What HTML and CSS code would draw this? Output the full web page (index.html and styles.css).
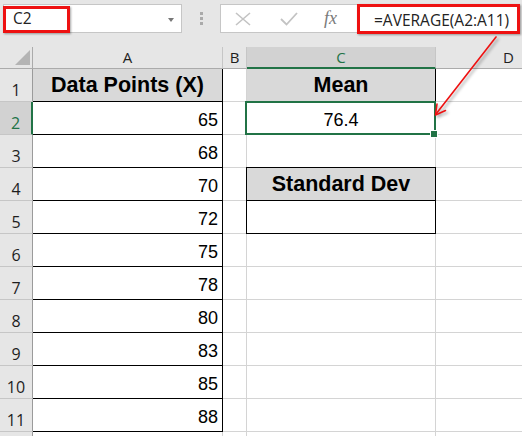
FILE: index.html
```html
<!DOCTYPE html>
<html>
<head>
<meta charset="utf-8">
<link rel="stylesheet" href="styles.css">
</head>
<body>
<div class="app">
  <div class="bar">
    <div class="namebox">
      <span class="nb-text">C2</span>
      <span class="caret"></span>
      <span class="mark"></span>
    </div>
    <div class="grip"><i></i><i></i><i></i></div>
    <div class="fxbox">
      <svg class="ico-x" width="16" height="14" viewBox="0 0 16 14"><path d="M1 1 L15 13 M15 1 L1 13" stroke="#c3c3c3" stroke-width="1.6" fill="none"/></svg>
      <svg class="ico-ok" width="18" height="14" viewBox="0 0 18 14"><path d="M1 7 L6.5 12.5 L17 1" stroke="#c3c3c3" stroke-width="1.8" fill="none"/></svg>
      <span class="fx">fx</span>
    </div>
    <div class="formula">=AVERAGE(A2:A11)</div>
  </div>

  <div class="sheet">
    <div class="corner"><svg width="33" height="22" viewBox="0 0 33 22"><polygon points="30,3 30,18 15,18" fill="#b4b4b4"/></svg></div>
    <div class="ch">A</div>
    <div class="ch">B</div>
    <div class="ch sel">C</div>
    <div class="ch">D</div>

    <div class="rh">1</div>
    <div class="c b hd">Data Points (X)</div>
    <div class="c"></div>
    <div class="c b hd">Mean</div>
    <div class="c"></div>

    <div class="rh sel">2</div>
    <div class="c b num">65</div>
    <div class="c"></div>
    <div class="c b val active">76.4</div>
    <div class="c"></div>

    <div class="rh">3</div>
    <div class="c b num">68</div>
    <div class="c"></div>
    <div class="c"></div>
    <div class="c"></div>

    <div class="rh">4</div>
    <div class="c b num">70</div>
    <div class="c"></div>
    <div class="c b hd boxtop boxleft">Standard Dev</div>
    <div class="c"></div>

    <div class="rh">5</div>
    <div class="c b num">72</div>
    <div class="c"></div>
    <div class="c b boxleft"></div>
    <div class="c"></div>

    <div class="rh">6</div>
    <div class="c b num">75</div>
    <div class="c"></div>
    <div class="c"></div>
    <div class="c"></div>

    <div class="rh">7</div>
    <div class="c b num">78</div>
    <div class="c"></div>
    <div class="c"></div>
    <div class="c"></div>

    <div class="rh">8</div>
    <div class="c b num">80</div>
    <div class="c"></div>
    <div class="c"></div>
    <div class="c"></div>

    <div class="rh">9</div>
    <div class="c b num">83</div>
    <div class="c"></div>
    <div class="c"></div>
    <div class="c"></div>

    <div class="rh">10</div>
    <div class="c b num">85</div>
    <div class="c"></div>
    <div class="c"></div>
    <div class="c"></div>

    <div class="rh">11</div>
    <div class="c b num">88</div>
    <div class="c"></div>
    <div class="c"></div>
    <div class="c"></div>

    <div class="rh"></div>
    <div class="c"></div>
    <div class="c"></div>
    <div class="c"></div>
    <div class="c"></div>
  </div>

  <svg class="arrow" width="522" height="436" viewBox="0 0 522 436">
    <g stroke="#ee1111" stroke-width="1.6" fill="none" stroke-linecap="round" stroke-linejoin="round">
      <line x1="496" y1="37" x2="436" y2="114"/>
      <polyline points="445.5,110.5 435.5,115 437,104"/>
    </g>
  </svg>
</div>
</body>
</html>
```

FILE: styles.css
```css
* { box-sizing: border-box; }

html, body {
  margin: 0;
  padding: 0;
}

body {
  background: #e6e6e6;
  font-family: "Open Sans", "Noto Sans", sans-serif;
}

.app {
  position: relative;
  width: 522px;
  height: 436px;
  overflow: hidden;
  background: #e6e6e6;
}

/* ---------- formula bar ---------- */
.bar {
  display: flex;
  align-items: flex-start;
  height: 47px;
  padding-top: 4px;
  padding-left: 3px;
}

.namebox {
  position: relative;
  display: flex;
  align-items: center;
  justify-content: space-between;
  width: 179px;
  height: 29px;
  background: #fff;
  border: 1px solid #c6c6c6;
  padding: 1px 7px 0 9px;
  font-size: 15.5px;
  color: #222;
}

.nb-text { line-height: 1; }

.caret {
  width: 0;
  height: 0;
  border-left: 3.5px solid transparent;
  border-right: 3.5px solid transparent;
  border-top: 4px solid #777;
  margin-top: 1px;
}

.mark {
  position: absolute;
  left: -1px;
  top: 1px;
  width: 67px;
  height: 27px;
  border: 3px solid #ee1111;
  box-shadow: 1px 1px 2px rgba(0, 0, 0, 0.35);
}

.grip {
  width: 38px;
  height: 29px;
  display: flex;
  flex-direction: column;
  align-items: center;
  gap: 2px;
  padding-top: 8px;
}

.grip i {
  display: block;
  width: 3px;
  height: 3px;
  background: #aaaaaa;
}

.fxbox {
  display: flex;
  align-items: center;
  width: 137px;
  height: 29px;
  background: #fff;
  border: 1px solid #c6c6c6;
  border-right: none;
  padding-left: 14px;
}

.ico-x { margin-top: 1px; }
.ico-ok { margin-left: 29px; margin-top: 1px; }

.fx {
  margin-left: 26px;
  font-family: "Liberation Serif", "DejaVu Serif", serif;
  font-style: italic;
  font-size: 18px;
  line-height: 1;
  color: #7a7a7a;
  margin-top: -2px;
}

.formula {
  display: flex;
  align-items: center;
  width: 163px;
  height: 30px;
  background: #fff;
  border: 3px solid #ee1111;
  padding: 1px 0 0 14px;
  font-size: 15.5px;
  color: #222;
  white-space: nowrap;
  box-shadow: 1px 1px 2px rgba(0, 0, 0, 0.35);
}

/* ---------- sheet grid ---------- */
.sheet {
  display: grid;
  grid-template-columns: 33px 190px 24px 189px 146px;
  grid-template-rows: 22px repeat(12, 33px);
  background: #fff;
  width: 582px;
}

.corner {
  background: #e6e6e6;
  border-right: 1px solid #ababab;
  border-bottom: 1px solid #ababab;
}
.corner svg { display: block; }

.ch {
  display: flex;
  align-items: flex-end;
  justify-content: center;
  background: #e6e6e6;
  border-right: 1px solid #c6c6c6;
  border-bottom: 1px solid #ababab;
  padding-bottom: 3px;
  font-size: 15px;
  line-height: 1;
  color: #1e1e1e;
}

.ch.sel {
  background: #d2d2d2;
  color: #217346;
  border-bottom: 2px solid #217346;
  padding-bottom: 2px;
}

.rh {
  display: flex;
  align-items: flex-end;
  justify-content: center;
  background: #e6e6e6;
  border-right: 1px solid #9b9b9b;
  border-bottom: 1px solid #c6c6c6;
  padding-bottom: 3px;
  font-size: 16px;
  line-height: 1;
  color: #1e1e1e;
}

.rh.sel {
  background: #d2d2d2;
  color: #217346;
  border-right: 2px solid #217346;
}

.c {
  display: flex;
  align-items: flex-end;
  background: #fff;
  border-right: 1px solid #d4d4d4;
  border-bottom: 1px solid #d4d4d4;
  padding: 0 4px 5px 4px;
  font-family: "Liberation Sans", Arial, sans-serif;
  font-size: 18px;
  line-height: 1;
  color: #000;
}

.c.b {
  border-right-color: #000;
  border-bottom-color: #000;
}

.c.hd {
  background: #d9d9d9;
  justify-content: center;
  font-weight: bold;
  font-size: 21.5px;
}

.c.num { justify-content: flex-end; }
.c.val { justify-content: center; }

.c.boxtop {
  margin-top: -1px;
  border-top: 1px solid #000;
}

.c.boxleft {
  margin-left: -1px;
  border-left: 1px solid #000;
}

.c.active { position: relative; }

.c.active::after {
  content: "";
  position: absolute;
  top: -1px;
  left: -2px;
  right: -1px;
  bottom: -1px;
  border: 2px solid #217346;
}

.c.active::before {
  content: "";
  position: absolute;
  right: -2px;
  bottom: -3px;
  width: 6px;
  height: 6px;
  background: #217346;
  box-shadow: 0 0 0 1px #fff;
  z-index: 2;
}

/* ---------- annotation ---------- */
.arrow {
  position: absolute;
  left: 0;
  top: 0;
  pointer-events: none;
  filter: drop-shadow(2px 2px 1.5px rgba(0, 0, 0, 0.35));
}
```
